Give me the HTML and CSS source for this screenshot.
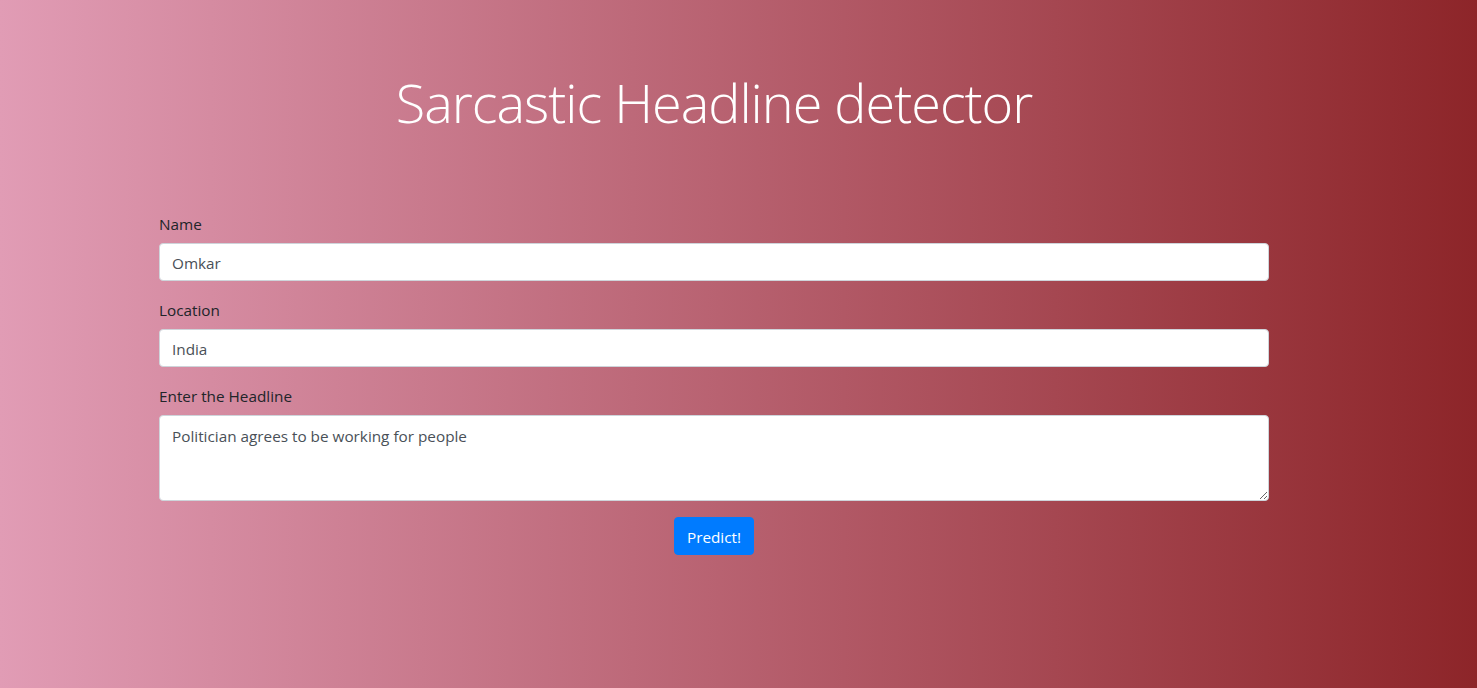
FILE: index.html
```html
<!DOCTYPE html>
<html>
<head>
<meta charset="utf-8">
<link rel="stylesheet" href="styles.css">
</head>
<body>
<div class="container">
  <h1 class="title">Sarcastic Headline detector</h1>
  <form class="form">
    <div class="form-group">
      <label class="label">Name</label>
      <input class="control" type="text" value="Omkar">
    </div>
    <div class="form-group">
      <label class="label">Location</label>
      <input class="control" type="text" value="India">
    </div>
    <div class="form-group">
      <label class="label">Enter the Headline</label>
      <textarea class="control area" rows="3">Politician agrees to be working for people</textarea>
    </div>
    <div class="actions">
      <button class="btn" type="button">Predict!</button>
    </div>
  </form>
</div>
</body>
</html>
```
FILE: styles.css
```css
html, body {
  margin: 0;
  height: 100%;
}
body {
  background: linear-gradient(to right, #e19cb5, #8d2529);
  font-family: "Open Sans", "Noto Sans", sans-serif;
  font-size: 15.3px;
  line-height: 24px;
  color: #212529;
}
.container {
  width: 1110px;
  margin-left: 159px;
}
.title {
  margin: 0;
  padding-top: 66px;
  height: 146px;
  box-sizing: border-box;
  font-size: 54px;
  letter-spacing: -1px;
  line-height: 72px;
  font-weight: 300;
  color: #fff;
  text-align: center;
}
.form {
  padding-top: 65px;
}
.form-group {
  display: flex;
  flex-direction: column;
  margin-bottom: 16px;
}
.label {
  margin-bottom: 8px;
  padding-top: 1px;
  height: 23px;
  display: block;
}
.control {
  display: block;
  box-sizing: border-box;
  width: 100%;
  height: 38px;
  padding: 7px 12px 5px;
  font-family: inherit;
  font-size: 15.3px;
  line-height: 24px;
  color: #495057;
  background: #fff;
  border: 1px solid #ced4da;
  border-radius: 4px;
  margin: 0;
}
.area {
  height: 86px;
  padding-top: 8px;
  resize: vertical;
}
.actions {
  display: flex;
  justify-content: center;
}
.btn {
  height: 38px;
  padding: 7px 12px 5px;
  font-family: inherit;
  font-size: 15.3px;
  line-height: 24px;
  color: #fff;
  background: #007bff;
  border: 1px solid #007bff;
  border-radius: 4px;
}
```
